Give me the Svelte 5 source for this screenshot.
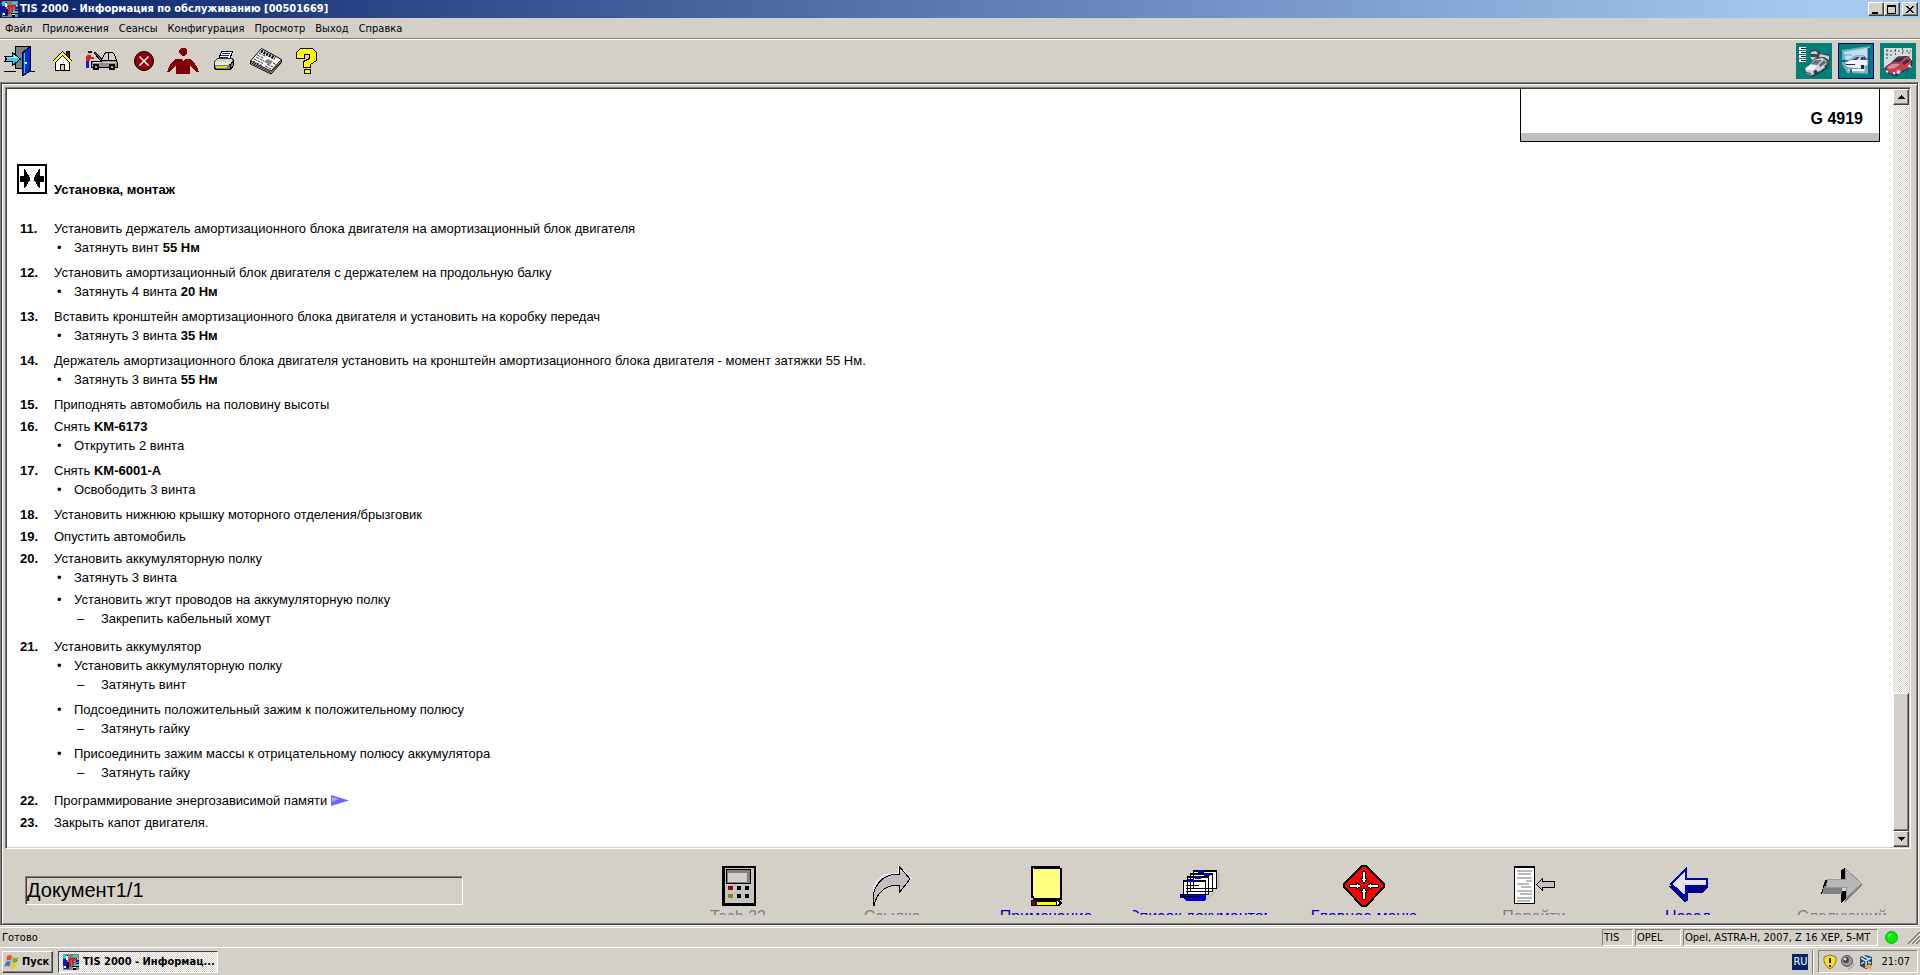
<script>
  const menus = ['Файл', 'Приложения', 'Сеансы', 'Конфигурация', 'Просмотр', 'Выход', 'Справка'];

  const steps = [
    { n: 11, text: 'Установить держатель амортизационного блока двигателя на амортизационный блок двигателя', subs: [{ text: 'Затянуть винт ', bold: '55 Нм' }] },
    { n: 12, text: 'Установить амортизационный блок двигателя с держателем на продольную балку', subs: [{ text: 'Затянуть 4 винта ', bold: '20 Нм' }] },
    { n: 13, text: 'Вставить кронштейн амортизационного блока двигателя и установить на коробку передач', subs: [{ text: 'Затянуть 3 винта ', bold: '35 Нм' }] },
    { n: 14, text: 'Держатель амортизационного блока двигателя установить на кронштейн амортизационного блока двигателя - момент затяжки 55 Нм.', subs: [{ text: 'Затянуть 3 винта ', bold: '55 Нм' }] },
    { n: 15, text: 'Приподнять автомобиль на половину высоты' },
    { n: 16, text: 'Снять ', bold: 'KM-6173', subs: [{ text: 'Открутить 2 винта' }] },
    { n: 17, text: 'Снять ', bold: 'KM-6001-A', subs: [{ text: 'Освободить 3 винта' }] },
    { n: 18, text: 'Установить нижнюю крышку моторного отделения/брызговик' },
    { n: 19, text: 'Опустить автомобиль' },
    { n: 20, text: 'Установить аккумуляторную полку', subs: [
      { text: 'Затянуть 3 винта' },
      { text: 'Установить жгут проводов на аккумуляторную полку', dash: 'Закрепить кабельный хомут' }
    ] },
    { n: 21, text: 'Установить аккумулятор', subs: [
      { text: 'Установить аккумуляторную полку', dash: 'Затянуть винт' },
      { text: 'Подсоединить положительный зажим к положительному полюсу', dash: 'Затянуть гайку' },
      { text: 'Присоединить зажим массы к отрицательному полюсу аккумулятора', dash: 'Затянуть гайку' }
    ] },
    { n: 22, text: 'Программирование энергозависимой памяти', link: true },
    { n: 23, text: 'Закрыть капот двигателя.' }
  ];
</script>

{#snippet appIcon()}
  <svg class="app-icon" width="16" height="16" viewBox="0 0 16 16" shape-rendering="crispEdges" aria-hidden="true">
    <path fill="#808080" d="M0 0h16v16H0z" />
    <path fill="#10e0e8" d="M0 1h3v3H0zM10 1h5v2h-5zM11 10h5v2h-5z" />
    <path fill="#0818c8" d="M0 5h4v7h2v3H1v-3H0zM13 6h3v2h-3z" />
    <path fill="#fff" d="M3 2h2v4H3zM1 12h2v2H1zM12 4h3v1h-3zM10 13h3v1h-3z" />
    <path fill="#000" d="M4 1h1v1H4zM4 8h2v5H4zM9 12h7v1H9zM13 9h3v1h-3zM10 14h3v2h-3z" />
    <path fill="#e01828" d="M6 4h8v2h-3v5H9V6H8v7H6z" />
  </svg>
{/snippet}

<div class="window">
  <header class="title">
    {@render appIcon()}
    <h1>TIS 2000 - Информация по обслуживанию [00501669]</h1>
    <div class="caption">
      <button class="raised cap" aria-label="Свернуть"><svg width="12" height="11" shape-rendering="crispEdges"><path d="M2 8h6v2H2z" /></svg></button>
      <button class="raised cap" aria-label="Развернуть"><svg width="12" height="11" shape-rendering="crispEdges"><path fill-rule="evenodd" d="M1 1h9v9H1zM2 3v6h7V3z" /></svg></button>
      <button class="raised cap last" aria-label="Закрыть"><svg width="12" height="11" shape-rendering="crispEdges"><path d="M2 2h2v1h1v1h2V3h1V2h2v1H9v1H8v1H7v1h1v1h1v1h1v1H8V8H7V7H5v1H4v1H2V8h1V7h1V6h1V5H4V4H3V3H2z" /></svg></button>
    </div>
  </header>

  <nav class="menu">
    {#each menus as m}<button>{m}</button>{/each}
  </nav>

  <div class="toolbar">
    <button class="t-door" aria-label="Выход">
      <svg width="32" height="32" viewBox="0 0 32 32" shape-rendering="crispEdges">
        <path d="M0 26h12v1H0zM26 26h5v1h-5z" />
        <path fill="#808080" stroke="#000" d="M11.500 1.500h15v22h-15z" />
        <path fill="#0828d8" stroke="#000" d="M18.500 7.500l8-6v24l-7 5h-1z" />
        <path fill="#00e8f8" d="M20 8l1-1v20l-1 1z" />
        <path fill="#fff" d="M21 17h2v2h-2z" />
        <path fill="#38c8f0" stroke="#000" d="M.5 11.500h8v-4l8 6.500-8 6.500v-4h-8l2-2.500z" />
        <path fill="#a0f8ff" d="M3 12h7v-2l3 3H3z" />
      </svg>
    </button>
    <button class="t-house" aria-label="Начало">
      <svg width="22" height="22" viewBox="0 0 22 22" shape-rendering="crispEdges">
        <path fill="#901010" stroke="#000" d="M14.500 1.500h3v8h-3z" />
        <path fill="#fff" stroke="#000" d="M3.500 11l7-7 7 7v9.500h-14z" />
        <path fill="none" stroke="#000" stroke-width="4" d="M2 12l8.500-8.500L19 12" />
        <path fill="none" stroke="#ffff40" stroke-width="2" d="M2 12l8.500-8.500L19 12" />
        <path fill="#ccc" stroke="#000" d="M8.500 14.500h4v6h-4z" />
      </svg>
    </button>
    <button class="t-car" aria-label="Автомобиль">
      <svg width="34" height="22" viewBox="0 0 34 22" shape-rendering="crispEdges">
        <path fill="#181818" d="M3 1h4v2H3z" />
        <path fill="#f0b090" d="M3 3h3v2H3z" />
        <path fill="#e02020" d="M2 5h4v2h3v2H5v2H1V7z" />
        <path fill="#1020d0" d="M1 11h3v7H1z" />
        <path fill="#d4d0c8" stroke="#000" d="M16.500 10.500l3-7 2-1h6l2 2 2 6z" />
        <path stroke="#000" d="M23.500 3v7" />
        <path fill="#909090" stroke="#000" d="M6.500 11.500h9l3-1h12l2 2v5h-26z" />
        <path fill="#ddd" d="M8 12h8v1H8zM18 12h13v1H18z" />
        <path fill="#707070" stroke="#000" d="M9.500 2.500h1l6 6v2h-1l-6-7z" />
        <g stroke="#000" stroke-width="2" fill="#aaa"><circle cx="11" cy="17" r="2.500" /><circle cx="27" cy="17" r="2.500" /></g>
      </svg>
    </button>
    <button class="t-stop" aria-label="Стоп">
      <svg width="22" height="22" viewBox="0 0 22 22">
        <circle cx="11" cy="11" r="9.500" fill="#900008" stroke="#000" />
        <path stroke="#fff" stroke-width="1.500" d="M6.500 6.500l9 9M15.500 6.500l-9 9" />
      </svg>
    </button>
    <button class="t-person" aria-label="Клиент">
      <svg width="32" height="28" viewBox="0 0 32 28" shape-rendering="crispEdges">
        <path fill="#800008" d="M14 1h4l2 2v3l-3 3h-2l-3-3V3zM9 12h5l2 2 2-2h5l4 3 3 5 2 5h-3l-4-5-2-1v8H9v-8l-2 1-4 5H0l2-5 3-5z" />
      </svg>
    </button>
    <button class="t-print" aria-label="Печать">
      <svg width="22" height="22" viewBox="0 0 22 22" shape-rendering="crispEdges">
        <path fill="#fff" stroke="#000" d="M8.500 1.500h11l-3 8h-11z" />
        <path stroke="#1020b0" d="M9 3.500h8M8 5.500h8M7 7.500h8" />
        <path fill="#d8d8c0" stroke="#333" d="M1.500 11.500l3-3h15l1 2-3 4h-16z" />
        <path fill="#777" stroke="#000" d="M17.500 14.500l3-4v5l-3 4zM1.500 14.500h16v5h-15l-1-2z" />
        <path fill="#e8e8d8" d="M2 12h14v3H2z" /><path fill="#d8e020" d="M3 16h11v2H3z" />
      </svg>
    </button>
    <button class="t-news" aria-label="Новости">
      <svg width="34" height="28" viewBox="0 0 34 28">
        <path fill="#fff" stroke="#000" d="M12.500 1.500l20 11v3L22 27 1.500 17v-3z" />
        <path fill="none" stroke="#000" d="M1.500 14l20.500 10L32.500 12.500M1.500 15.500L22 25.500 32.500 14" />
        <path stroke="#333" stroke-dasharray="3 1" d="M10 6l7 3.500M8 8l7 3.500M7 10l8 4M5 12l9 4.500M4 14l9 4.500M18 17l6 3M16 19l6 3M24 16l3 1.500" />
        <path stroke="#000" stroke-width="3" stroke-dasharray="2 1" d="M12 4l14 7.500" />
        <path fill="#888" d="M18 12l6 2-3 4-6-3z" />
      </svg>
    </button>
    <button class="t-help" aria-label="Помощь">
      <svg width="24" height="28" viewBox="0 0 24 28" shape-rendering="crispEdges">
        <path fill="#ff0" stroke="#000" d="M1.500 11.500v-6l4-4h12l4 4v8l-6 4v3h-7v-6l6-3v-4h-5v4zM9.500 22.500h6v4h-6z" />
      </svg>
    </button>
    <div class="modes">
      <button class="mode" aria-label="Каталог">
        <svg width="34" height="34" viewBox="0 0 34 34">
          <path fill="#fff" d="M2 3h7v3H2zM2 7h7v3H2zM2 11h7v3H2zM2 15h7v3H2z" />
          <path stroke="#123" d="M4 4.500h5M4 8.500h5M4 12.500h5M4 16.500h5" />
          <path fill="#404848" d="M13 6l8 0 3 3 9 2v7l-19-3z" />
          <path fill="#c8d0d4" d="M14 8l5-1 2 3h-7zM23 10l9 2v4l-5-3h-5zM13 13h6l-3 4z" />
          <path fill="#063c3c" d="M9 29l7 4 15-9 1-5z" />
          <path fill="#ccd2dc" stroke="#4c5864" d="M7.500 24l5-3.500 5-5.500 8-1.500 4 3 1 5.500-7 5-8.500 4.500-6-1.500z" />
          <path fill="#68747e" d="M14 20l4-4 7 0-5 5z" /><path fill="#59656f" d="M22 21l5-5 2 3-6 4z" />
          <path fill="#f4f6fa" d="M9 24l4-3 7 1-4 4-6 0z" />
          <path fill="#38424c" d="M9 28l5 1v1l-5-1z" />
          <circle cx="18.500" cy="28" r="2" fill="#2c343c" /><circle cx="29" cy="22" r="1.500" fill="#2c343c" />
        </svg>
      </button>
      <button class="mode active" aria-label="Сервис">
        <svg width="34" height="34" viewBox="0 0 34 34">
          <path fill="#68b4c0" d="M3 6l28-4v28l-23-1-5-9z" /><path fill="#c4e0ee" d="M5 8l23-4v13l-3 12-16-2z" />
          <path stroke="#2050a0" stroke-width="2" d="M30 4v26M12 22v7M3 17h6" />
          <path fill="#ecf4ff" stroke="#6880a8" d="M6 18l5-2 5-4 9 0 4 4v5l-7 4-13-1-3-2z" />
          <path fill="#385080" d="M12 16l5-3h4l-3 3zM22 13h4l2 3h-7z" />
          <path fill="#182848" d="M7 20h9v1H7zM22 21h3v4h-3z" />
          <path stroke="#8098c8" d="M6 25h8M14 28h12M4 11h9" /><path stroke="#fff" stroke-width="2" d="M13 26h12" />
        </svg>
      </button>
      <button class="mode" aria-label="Ремонт">
        <svg width="34" height="34" viewBox="0 0 34 34">
          <path fill="#d4dcdc" d="M3 4h28v20H3z" />
          <path stroke="#556" fill="none" stroke-dasharray="2 2" d="M5 7h25M5 11h8M14.500 5v8M21.500 4v8M6 5v12M28 8v12" />
          <path fill="#211" d="M8 28l7 4 15-9 2-4z" />
          <path fill="#b84454" stroke="#501c2c" d="M4.500 23l6-4 6-6 10-.5 4 4 0 6-7 4-10 5-7-3z" />
          <path fill="#303060" d="M11 18l5-4 8-1-5 5z" /><path fill="#40284c" d="M21 19l5-4 3 2-6 4z" /><path fill="#e08c98" d="M6 23l5-3 8 0-5 4-6 1z" />
          <path fill="#f0e8f0" d="M5 26l2 1v2l-2-1zM12 28h2v2h-2z" />
          <circle cx="17.500" cy="28" r="2" fill="#ddd" /><circle cx="28.500" cy="22" r="1.500" fill="#ddd" />
        </svg>
      </button>
    </div>
  </div>

  <div class="frame">
    <div class="pane">
      <main class="doc">
        <div class="code"><b>G 4919</b></div>
        <h2>
          <svg width="30" height="30" viewBox="0 0 30 30" shape-rendering="crispEdges" aria-hidden="true">
            <path fill="#fff" stroke="#000" stroke-width="2" d="M1 1h28v28H1z" />
            <path d="M3 12h4V5h1l5 9v2l-5 8H7v-6H3zM27 12h-4V5h-1l-5 9v2l5 8h1v-6h4z" />
          </svg>
          <span>Установка, монтаж</span>
        </h2>
        <ol class="steps">
          {#each steps as s}
            <li>
              <b class="num">{s.n}.</b>
              <div class="body">
                <p>{s.text}{#if s.bold}<b>{s.bold}</b>{/if}{#if s.link}<a href="#memory" aria-label="Перейти к разделу"><svg width="18" height="11" viewBox="0 0 18 11"><path fill="#6868f0" d="M0 0l18 5.500L0 11z" /><path fill="#a8a8ff" d="M1 2l7 2-7 3z" /></svg></a>{/if}</p>
                {#if s.subs}
                  <ul>
                    {#each s.subs as sub}
                      <li>
                        <span class="bullet">•</span>
                        <div>
                          <p>{sub.text}{#if sub.bold}<b>{sub.bold}</b>{/if}</p>
                          {#if sub.dash}<p class="dash"><span>–</span>{sub.dash}</p>{/if}
                        </div>
                      </li>
                    {/each}
                  </ul>
                {/if}
              </div>
            </li>
          {/each}
        </ol>
      </main>
      <div class="scroll">
        <button class="raised arrow" aria-label="Вверх"><svg width="7" height="4" shape-rendering="crispEdges"><path d="M3 0h1v1h1v1h1v1h1v1H0V3h1V2h1V1h1z" /></svg></button>
        <div class="track"><div class="raised thumb"></div></div>
        <button class="raised arrow" aria-label="Вниз"><svg width="7" height="4" shape-rendering="crispEdges"><path d="M0 0h7v1H6v1H5v1H4v1H3V3H2V2H1V1H0z" /></svg></button>
      </div>
    </div>

    <div class="bottom">
      <div class="counter">Документ1/1</div>
      <div class="actions">
        <button disabled>
          <svg width="44" height="42" viewBox="0 0 44 42" shape-rendering="crispEdges">
            <path d="M6 1h34v40H6z" /><path fill="#c4c4c4" d="M9 3h29v35H9z" />
            <path d="M10 4h25v15H10z" /><path fill="#808080" d="M11 5h23v13H11z" /><path fill="#d4d0c8" d="M12 8h19v9H12z" />
            <path fill="#900" d="M12 21h5v4h-5z" /><path fill="#880" d="M12 29h5v4h-5z" /><path d="M21 21h4v4h-4zM29 21h4v4h-4zM21 29h4v4h-4zM29 29h4v4h-4z" />
          </svg>
          <span>Tech 32</span>
        </button>
        <button disabled>
          <svg width="44" height="42" viewBox="0 0 44 42" shape-rendering="crispEdges">
            <path fill="none" stroke="#fff" d="M3 36v-13l5-8 6-5 14-2V1l14 13" />
            <path fill="#c0c0c0" stroke="#000" d="M4 41C0 22 12 9 29 9V1l11 13-11 14v-8C16 20 7 27 4 41z" />
          </svg>
          <span>Ссылка</span>
        </button>
        <button>
          <svg width="44" height="42" viewBox="0 0 44 42" shape-rendering="crispEdges">
            <path d="M7 1h29v2h2v32H9v-2H7z" /><path fill="#ffff80" d="M10 4h26v29H10zM9 3h1v28H9z" />
            <path d="M7 35h28l4 3-4 3H7z" /><path fill="#800000" d="M8 36h3v4H8z" /><path fill="#ff0" d="M13 37h19v3H13z" /><path fill="#fff" d="M33 36l3 2-3 2z" />
          </svg>
          <span>Примечание</span>
        </button>
        <button>
          <svg width="44" height="42" viewBox="0 0 44 42" shape-rendering="crispEdges">
            <path fill="#bcbcc4" d="M8 34h20l14-12V8h-4v18l-9 10H9z" />
            <g fill="#fff" stroke="#000"><path d="M15.500 6.500h23v17h-23zM12.500 9.500h22v17h-22zM9.500 12.500h21v17h-21zM5.500 16.500h22v15h-22z" /></g>
            <path stroke="#000" stroke-width="2" d="M15 6h24M12 9h23M9 12h22M5 16h23" />
            <path fill="#0000b8" d="M20 5h6v3h-6zM26 8h6v3h-6zM17 11h6v3h-6zM10 14h6v3h-6z" />
            <path fill="#0000d0" d="M2 29h22l4 2v3l-2 2H8l-3-3H2z" />
            <path stroke="#000" d="M8 20.500h13M8 23.500h9M8 26.500h13M2 29.500h22M2 31.500h20" />
          </svg>
          <span>Список документов</span>
        </button>
        <button class="gap-s">
          <svg width="44" height="42" viewBox="0 0 44 42" shape-rendering="crispEdges">
            <path fill="#f00" stroke="#000" stroke-width="2" d="M20 1h4l18 18v3L24 41h-4L2 22v-3z" />
            <g fill="#fff" stroke="#000"><path d="M20.500 6.500h3v7h2l-3 4h-1l-3-4h2zM20.500 34.500h3v-7h2l-3-4h-1l-3 4h2zM7.500 19.500h7v-2l4 3v1l-4 3v-2h-7zM36.500 19.500h-7v-2l-4 3v1l4 3v-2h7z" /></g>
            <path stroke="#000" d="M17 16l3 3M27 16l-3 3M17 26l3-3M27 26l-3-3" />
          </svg>
          <span>Главное меню</span>
        </button>
        <button class="gap-l" disabled>
          <svg width="44" height="42" viewBox="0 0 44 42" shape-rendering="crispEdges">
            <path fill="#fff" stroke="#000" d="M2.500 2.500h20v36h-20z" /><path d="M2 1h21v2H2z" />
            <path stroke="#bbb" stroke-width="2" d="M5 6h15M6 9h13M5 13h15M14 16h6M5 19h12M9 22h10M5 26h15M8 29h12M5 33h15M5 36h13" />
            <path fill="#c0c0c0" stroke="#000" d="M24.500 19.500l6-6v3h12v6h-12v3z" />
          </svg>
          <span>Перейти</span>
        </button>
        <button>
          <svg width="44" height="42" viewBox="0 0 44 42" shape-rendering="crispEdges">
            <path fill="#000080" d="M2 21h3l15-6 22 0v8l-6 5H22v8l-4 1z" />
            <path fill="#e4e4ee" stroke="#0000b0" stroke-width="2" d="M5 19L20 4v10h21v7H20v11z" />
          </svg>
          <span>Назад</span>
        </button>
        <button disabled>
          <svg width="44" height="42" viewBox="0 0 44 42" shape-rendering="crispEdges">
            <path d="M1 29l4-14h4l-4 14zM21 15V5l4-2v12zM21 38V26h5v7z" />
            <path fill="#808080" d="M4 21h18v8H2zM26 33l15-15 1 2-18 18z" />
            <path fill="#b8b8b8" stroke="#999" d="M7.500 14.500h18v-11l16 15-15 14v-10h-20z" />
          </svg>
          <span>Следующий</span>
        </button>
      </div>
    </div>
  </div>

  <footer class="status">
    <span class="ready">Готово</span>
    <span class="cell c1">TIS</span>
    <span class="cell c2">OPEL</span>
    <span class="cell c3">Opel, ASTRA-H, 2007, Z 16 XEP, 5-MT</span>
    <svg class="lamp" width="15" height="15" viewBox="0 0 15 15"><circle cx="7.500" cy="7.500" r="6" fill="#00f000" stroke="#20a020" /><path fill="none" stroke="#fff" d="M4 6.500l3-2.500" /></svg>
    <svg width="12" height="12" viewBox="0 0 12 12"><path stroke="#808080" stroke-width="1.500" d="M0 12L12 0M4 12l8-8M8 12l4-4" /><path stroke="#fff" d="M2 12L12 2M6 12l6-6" /></svg>
  </footer>

  <footer class="taskbar">
    <button class="raised start">
      <svg width="16" height="16" viewBox="0 0 16 16">
        <path fill="#e85820" d="M3 2q3-2 5 0L7 7Q5 5 2 7z" /><path fill="#78b828" d="M9 3q3 2 6 0l-2 5q-3 2-5 0z" />
        <path fill="#3878d8" d="M2 8q3-2 5 0l-2 5q-2-2-5 0z" /><path fill="#f8c020" d="M7 9q3 2 6 0l-2 5q-3 2-5 0z" />
      </svg>
      Пуск
    </button>
    <button class="task">{@render appIcon()}TIS 2000 - Информац...</button>
    <span class="lang">RU</span>
    <span class="divider"></span>
    <div class="tray">
      <svg width="16" height="16" viewBox="0 0 16 16"><path fill="#f8e020" stroke="#887820" d="M8 1l6 2q1 8-6 12Q1 11 2 3z" /><path fill="#222" d="M7 4h2v5H7zM7 11h2v2H7z" /></svg>
      <svg width="16" height="16" viewBox="0 0 16 16"><circle cx="7" cy="7" r="5.500" fill="#999" stroke="#555" /><circle cx="6" cy="6" r="3" fill="#444" /><circle cx="5" cy="5" r="1.500" fill="#ddd" /><path fill="none" stroke="#99c" d="M11 14q3-1 3-5M8 15q3 0 4-3" /></svg>
      <svg width="16" height="16" viewBox="0 0 16 16"><path fill="#284868" d="M2 3l6-2 6 2v9l-6 3-6-3z" /><path fill="none" stroke="#c8e0f0" stroke-width="1.500" d="M3 4l5 3 5-3M8 7v7M3 10l3-2M13 9l-3-1M5 2l6 3" /><path fill="#f8a020" d="M11 9l1 2h3l-2 2 1 3-3-2-2 2v-3l-2-2h3z" /></svg>
      <time>21:07</time>
    </div>
  </footer>
</div>

<style>
  :global(body) { margin: 0; background: #d4d0c8; }
  .window { display: flex; flex-direction: column; min-height: 100vh; background: #d4d0c8; color: #000; font: 11px/14px "DejaVu Sans Condensed", "DejaVu Sans", sans-serif; }
  button { font: inherit; color: inherit; background: none; border: 0; padding: 0; margin: 0; }
  svg { display: block; flex: none; }
  p, h1, h2, ol, ul { margin: 0; padding: 0; list-style: none; font-size: inherit; }

  .raised { background: #d4d0c8; border: 1px solid; border-color: #fff #404040 #404040 #fff; box-shadow: inset -1px -1px #808080; }

  .title { display: flex; align-items: center; height: 18px; gap: 2px; padding: 0 2px 0 2px; color: #fff; background: linear-gradient(90deg, #0a246a, #a6caf0 95%); }
  .title h1 { flex: 1; font-weight: bold; white-space: nowrap; }
  .caption { display: flex; }
  .cap { width: 16px; height: 14px; padding: 0 1px; }
  .cap.last { margin-left: 2px; }

  .menu { display: flex; height: 20px; border-bottom: 1px solid #808080; box-shadow: 0 1px #fff; margin-bottom: 1px; }
  .menu button { padding: 1px 5px 0; }

  .toolbar { display: flex; align-items: center; height: 42px; padding: 0 4px; }
  .t-house { margin-left: 16px; }
  .t-car { margin-left: 11px; }
  .t-stop { margin-left: 14px; }
  .t-person { margin-left: 12px; }
  .t-print { margin-left: 14px; }
  .t-news { margin-left: 14px; }
  .t-help { margin-left: 12px; }
  .modes { display: flex; gap: 6px; margin-left: auto; }
  .mode { width: 36px; height: 36px; border: 1px solid #008078; background: #008078; }
  .mode.active { border-color: #000080; }

  .frame { flex: 1; display: flex; flex-direction: column; margin-right: 2px; border: 1px solid; border-color: #808080 #404040 #404040 #808080; box-shadow: inset 1px 1px #404040, inset 2px 2px #fff, inset -1px -1px #808080, 1px 1px #fff; padding: 4px; }
  .pane { flex: 1; display: flex; background: #fff; margin-right: 2px; border: 1px solid; border-color: #808080 #fff #fff #808080; box-shadow: inset 1px 1px #404040, inset -1px -1px #d4d0c8; padding: 1px; }
  .doc { flex: 1; padding: 0 13px 10px 10px; font: 13px/19px "Liberation Sans", Arial, sans-serif; }
  .code { box-sizing: border-box; width: 360px; height: 53px; margin-left: auto; padding: 20px 16px 0 0; text-align: right; font-size: 16px; border: 1px solid #000; border-top: 0; box-shadow: inset 0 -8px #c0c0c0; }
  h2 { display: flex; gap: 7px; align-items: flex-start; margin-top: 22px; font-weight: bold; }
  h2 span { padding-top: 16px; }
  .steps { margin-top: 20px; }
  .steps li { display: flex; margin-bottom: 3px; }
  .num { width: 34px; padding-left: 3px; }
  .bullet { width: 17px; padding-left: 3px; }
  .dash { padding-left: 3px; margin-bottom: 3px; }
  .dash span { display: inline-block; width: 24px; }
  .steps a { display: inline-block; margin-left: 4px; vertical-align: -1px; }

  .scroll { display: flex; flex-direction: column; width: 16px; }
  .arrow { width: 16px; height: 16px; display: grid; place-items: center; }
  .track { flex: 1; display: flex; flex-direction: column; justify-content: flex-end; background: repeating-conic-gradient(#fff 0 25%, #d4d0c8 0 50%) 0 0 / 2px 2px; }
  .thumb { height: 19%; box-sizing: border-box; }

  .bottom { display: flex; justify-content: space-between; height: 71px; padding: 0 4px 0 20px; }
  .counter { box-sizing: border-box; width: 438px; height: 29px; margin-top: 27px; font: 20px/26px "Liberation Sans", Arial, sans-serif; border: 1px solid; border-color: #808080 #fff #fff #808080; box-shadow: inset 1px 1px #404040; padding-left: 1px; }
  .actions { display: flex; gap: 20px; padding-top: 16px; }
  .actions button { width: 134px; height: 50px; overflow: hidden; display: flex; flex-direction: column; align-items: center; justify-content: flex-start; gap: 1px; color: #0000c0; font: 16px/18px "Liberation Sans", Arial, sans-serif; white-space: nowrap; }
  .actions button:disabled { color: #808080; }
  .actions .gap-s { margin-left: 10px; }
  .actions .gap-l { margin-left: 16px; }

  .status { display: flex; align-items: center; height: 19px; margin-top: 2px; border-top: 1px solid #fff; padding-left: 2px; }
  .ready { flex: 1; }
  .cell { box-sizing: border-box; height: 17px; line-height: 15px; border: 1px solid; border-color: #808080 #fff #fff #808080; padding-left: 1px; margin-right: 2px; white-space: nowrap; }
  .c1 { width: 31px; }
  .c2 { width: 46px; }
  .c3 { width: 195px; }
  .lamp { margin: 0 9px 0 4px; }

  .taskbar { display: flex; align-items: center; height: 27px; border-top: 1px solid #fff; padding: 0 2px; }
  .start { display: flex; align-items: center; gap: 2px; width: 51px; height: 22px; font-weight: bold; padding-left: 1px; }
  .task { display: flex; align-items: center; gap: 4px; width: 160px; height: 22px; margin-left: 5px; padding-left: 4px; font-weight: bold; white-space: nowrap; border: 1px solid; border-color: #404040 #fff #fff #404040; background: repeating-conic-gradient(#fff 0 25%, #d4d0c8 0 50%) 0 0 / 2px 2px; }
  .lang { margin-left: auto; width: 16px; text-align: center; line-height: 16px; color: #fff; background: #0a246a; }
  .divider { width: 1px; height: 24px; margin: 0 4px; background: #808080; border-right: 1px solid #fff; }
  .tray { display: flex; align-items: center; gap: 2px; height: 23px; box-sizing: border-box; border: 1px solid; border-color: #808080 #fff #fff #808080; padding: 0 7px 0 3px; }
  .tray time { margin-left: 5px; }
</style>
